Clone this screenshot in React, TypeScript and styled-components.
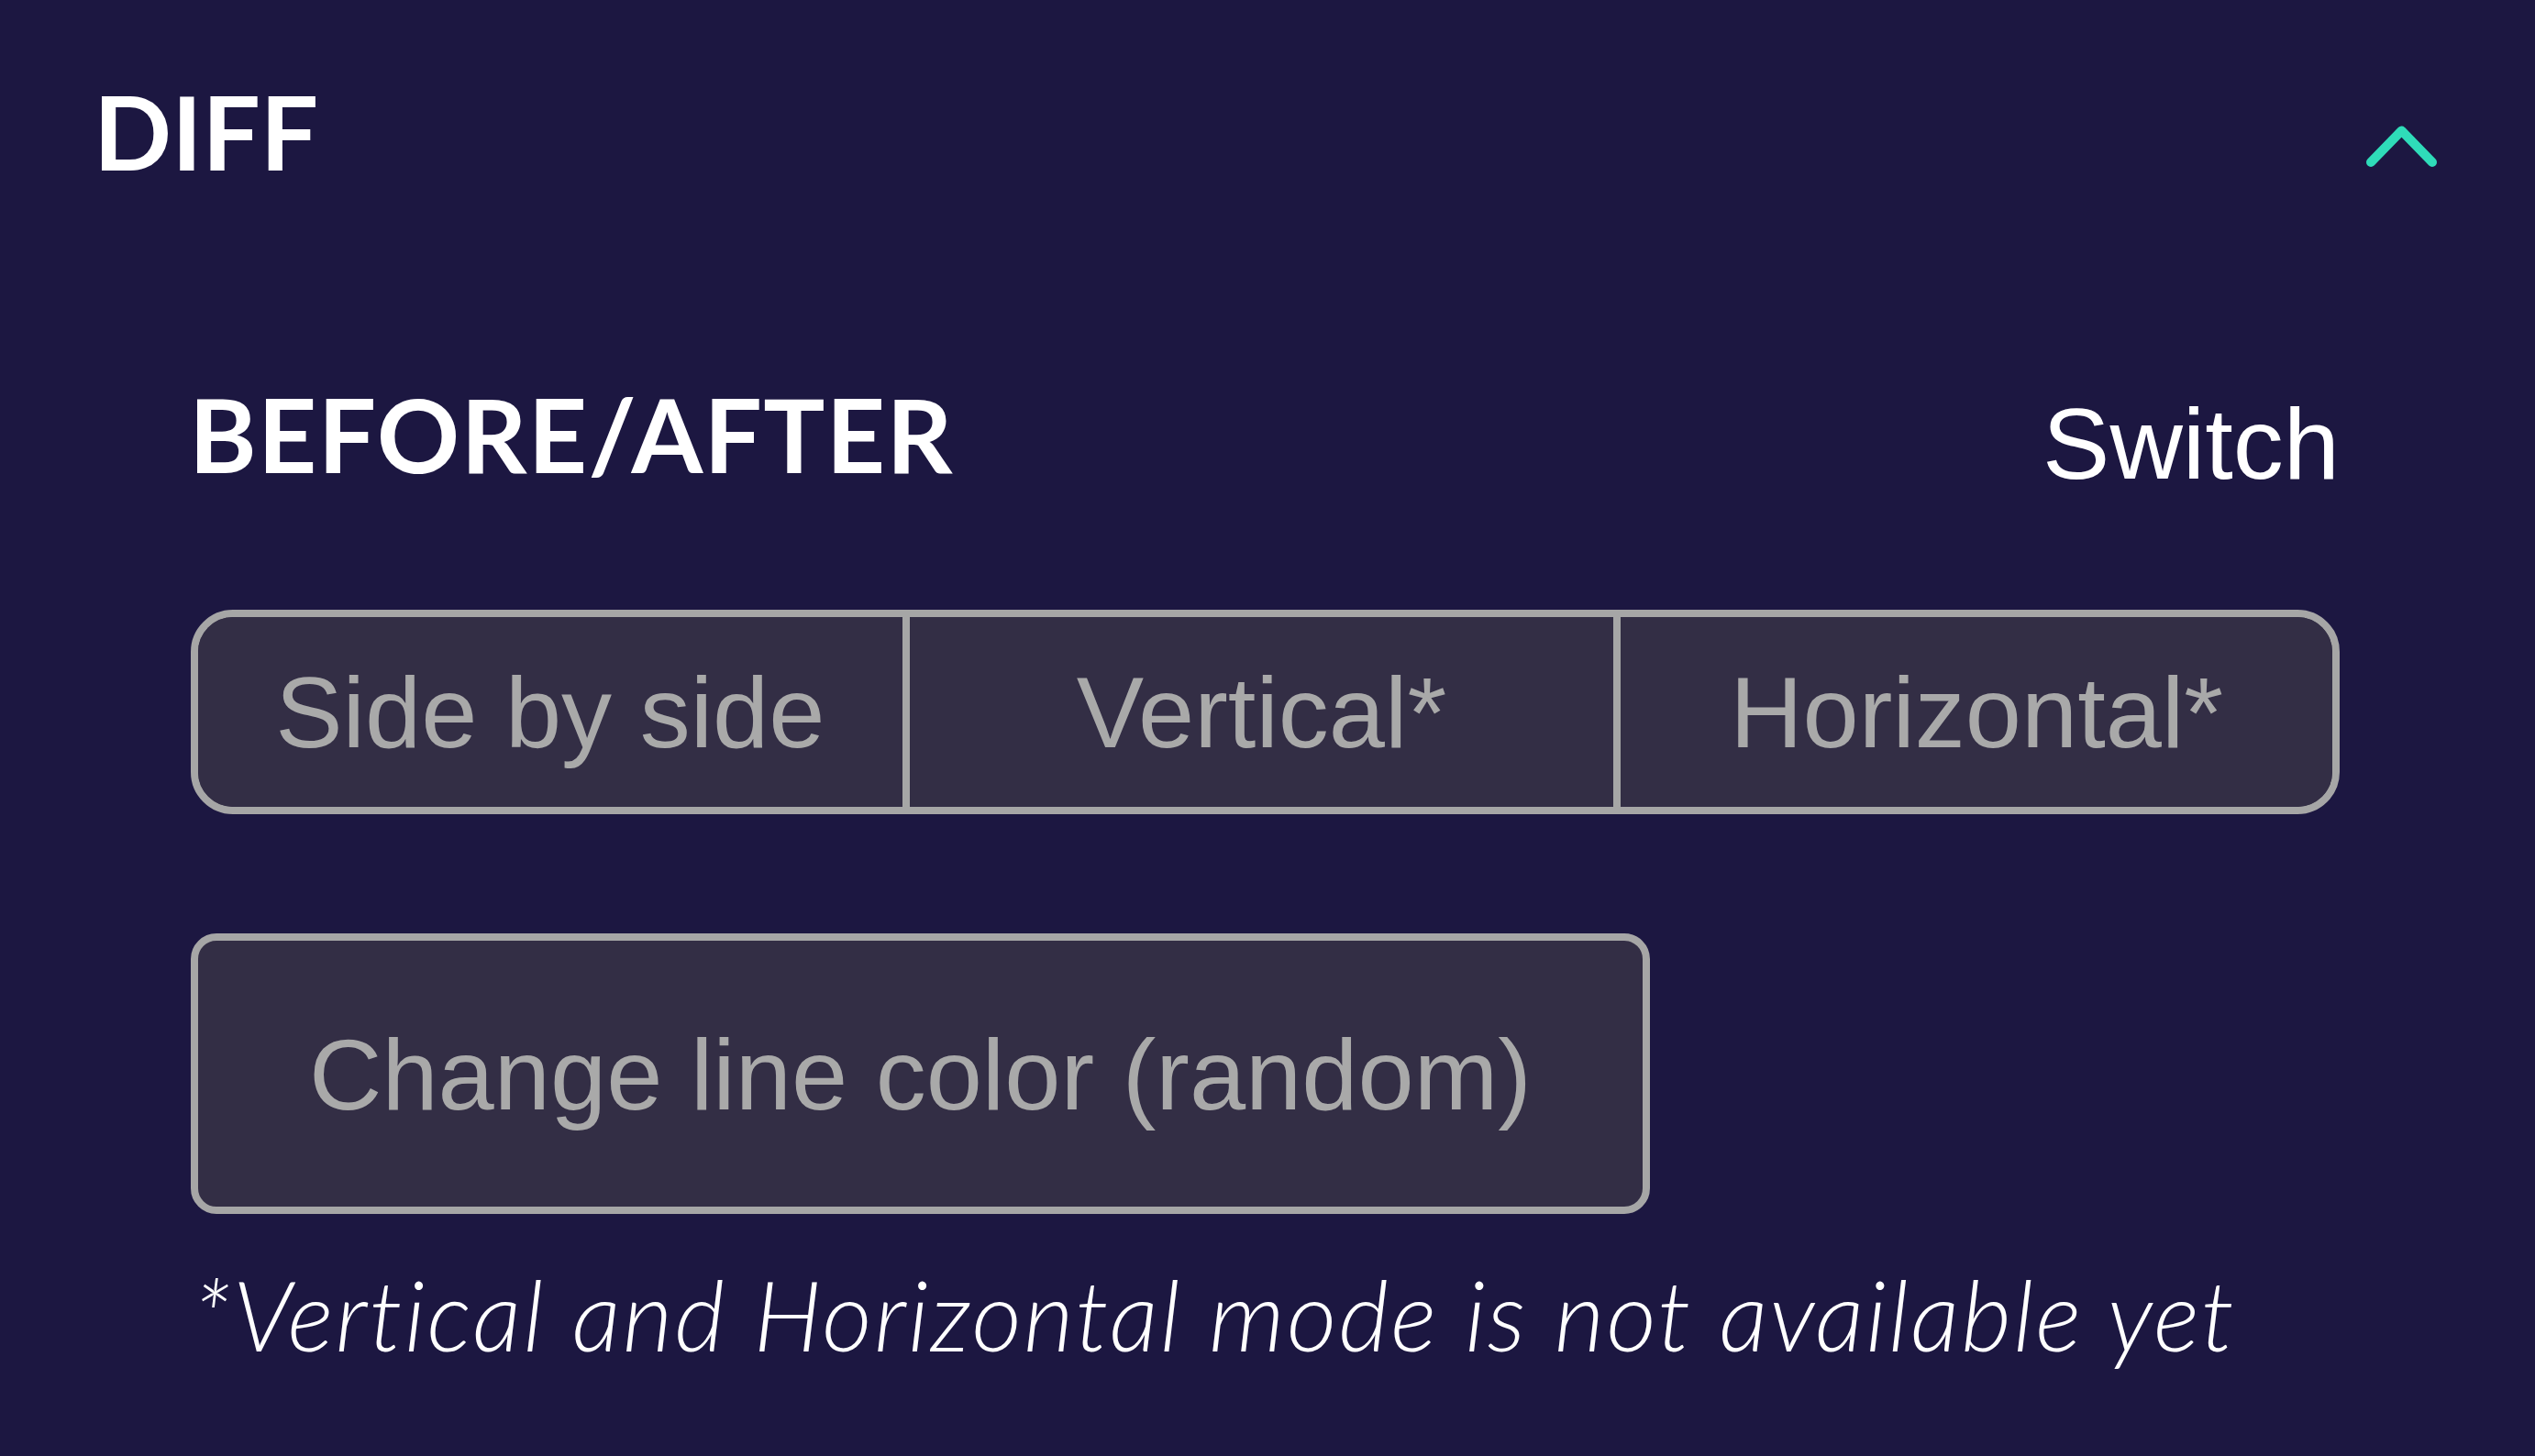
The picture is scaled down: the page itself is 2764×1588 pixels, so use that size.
import React from "react";
import styled, { createGlobalStyle } from "styled-components";

const Global = createGlobalStyle`
  html, body {
    margin: 0;
    padding: 0;
    background: #1c1741;
  }
  #root {
    min-height: 1588px;
    background: #1c1741;
  }
`;

const Page = styled.div`
  box-sizing: border-box;
  width: 2764px;
  min-height: 1588px;
  padding: 87px 107px 0 102px;
  display: flex;
  flex-direction: column;
`;

const Header = styled.div`
  display: flex;
  justify-content: space-between;
  align-items: flex-start;
`;

const Title = styled.h1`
  margin: 0;
  font-family: "Lato", "Open Sans", sans-serif;
  font-weight: 700;
  font-size: 112px;
  line-height: 112px;
  color: #ffffff;
  letter-spacing: 0px;
`;

const Chevron = styled.svg`
  display: block;
  margin-top: 50px;
  width: 77px;
  height: 45px;
`;

const Section = styled.section`
  margin: 218px 106px 0 106px;
  display: flex;
  flex-direction: column;
`;

const SectionHeader = styled.div`
  display: flex;
  justify-content: space-between;
  align-items: flex-start;
`;

const Subtitle = styled.h2`
  margin: 0 0 0 -2px;
  font-family: "Lato", "Open Sans", sans-serif;
  font-weight: 700;
  font-size: 112px;
  line-height: 112px;
  color: #ffffff;
  letter-spacing: 1.3px;
`;

const SwitchLink = styled.button`
  margin: 11px 0 0 0;
  padding: 0;
  border: none;
  background: none;
  font-family: "Liberation Sans", Arial, sans-serif;
  font-size: 110px;
  line-height: 112px;
  color: #ffffff;
`;

const Segmented = styled.div`
  margin-top: 125px;
  display: grid;
  grid-template-columns: 1fr 1fr 1fr;
  height: 223px;
  box-sizing: border-box;
  border: 8px solid #a6a6a6;
  border-radius: 46px;
  overflow: hidden;
  background: #332e45;
`;

const Segment = styled.button<{ $last?: boolean }>`
  display: flex;
  align-items: center;
  justify-content: center;
  padding: 0;
  margin: 0;
  border: none;
  border-right: ${(p) => (p.$last ? "none" : "8px solid #a6a6a6")};
  background: #332e45;
  font-family: "Liberation Sans", Arial, sans-serif;
  font-size: 110px;
  color: #a9a9a9;
`;

const ActionButton = styled.button`
  align-self: flex-start;
  margin-top: 130px;
  box-sizing: border-box;
  height: 306px;
  padding: 0 121px;
  border: 8px solid #a6a6a6;
  border-radius: 28px;
  background: #332e45;
  font-family: "Liberation Sans", Arial, sans-serif;
  font-size: 110px;
  color: #a9a9a9;
`;

const Note = styled.p`
  margin: 56px 0 0 2px;
  font-family: "Lato", "Open Sans", sans-serif;
  font-weight: 300;
  font-style: italic;
  font-size: 106px;
  line-height: 106px;
  color: #ffffff;
  letter-spacing: 2.2px;
  white-space: nowrap;
`;

export default function App() {
  return (
    <>
      <Global />
      <Page>
        <Header>
          <Title>DIFF</Title>
          <Chevron viewBox="0 0 77 45" aria-hidden="true">
            <polyline
              points="5,40 38.5,5.5 72,40"
              fill="none"
              stroke="#2fdcb9"
              strokeWidth="10"
              strokeLinecap="round"
              strokeLinejoin="round"
            />
          </Chevron>
        </Header>
        <Section>
          <SectionHeader>
            <Subtitle>BEFORE/AFTER</Subtitle>
            <SwitchLink>Switch</SwitchLink>
          </SectionHeader>
          <Segmented>
            <Segment>Side by side</Segment>
            <Segment>Vertical*</Segment>
            <Segment $last>Horizontal*</Segment>
          </Segmented>
          <ActionButton>Change line color (random)</ActionButton>
          <Note>*Vertical and Horizontal mode is not available yet</Note>
        </Section>
      </Page>
    </>
  );
}
